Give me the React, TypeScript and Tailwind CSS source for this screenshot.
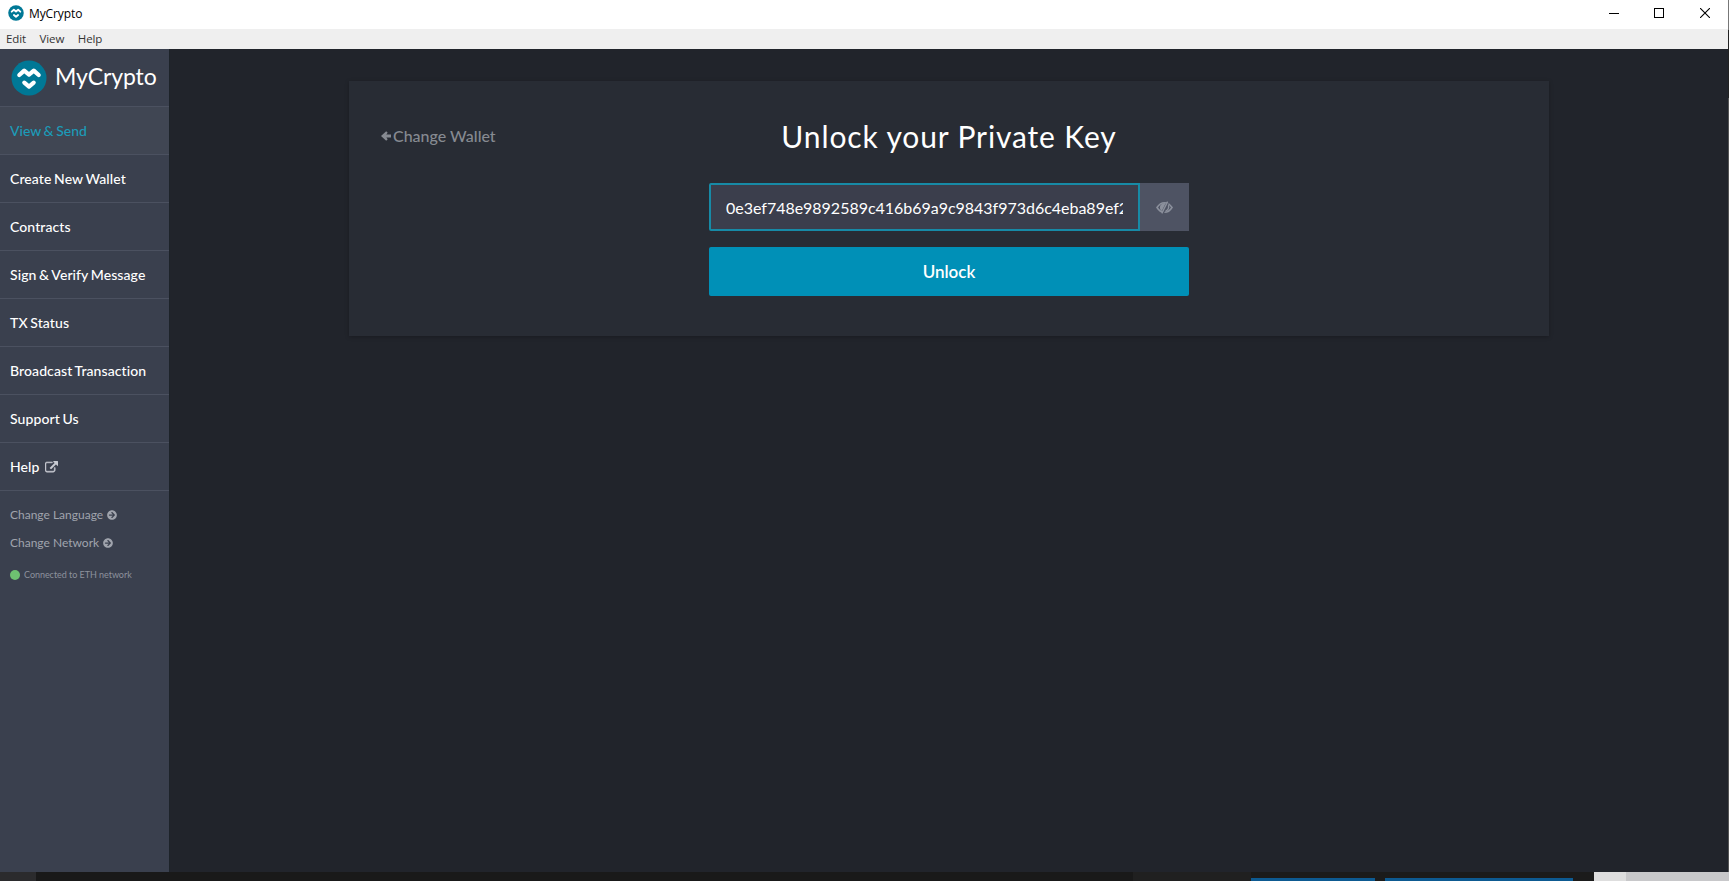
import React from "react";
import { FaArrowCircleRight } from "react-icons/fa";

const links = [
  "View & Send",
  "Create New Wallet",
  "Contracts",
  "Sign & Verify Message",
  "TX Status",
  "Broadcast Transaction",
  "Support Us",
  "Help",
];

function LogoMark({ className }: { className: string }) {
  return (
    <svg viewBox="0 0 36 36" className={className} fill="none">
      <circle cx="18" cy="18" r="17.5" fill="#007896" />
      <path
        d="M8.3 15 L13.2 10.6 L18 14.6 L22.8 10.6 L27.7 15"
        stroke="#fff"
        strokeWidth="4.2"
        strokeLinecap="round"
        strokeLinejoin="round"
      />
      <path
        d="M13.3 22.7 L18 26.6 L22.7 22.7"
        stroke="#fff"
        strokeWidth="4.2"
        strokeLinecap="round"
        strokeLinejoin="round"
      />
    </svg>
  );
}

function ExternalLinkIcon() {
  return (
    <svg viewBox="0 0 1792 1792" className="mt-px ml-[5px] size-[13px]" fill="#c9ccd3" stroke="#c9ccd3" strokeWidth="70">
      <path d="M1408 928v320q0 119-84.5 203.5T1120 1536H288q-119 0-203.5-84.5T0 1248V416q0-119 84.5-203.5T288 128h704q14 0 23 9t9 23v64q0 14-9 23t-23 9H288q-66 0-113 47t-47 113v832q0 66 47 113t113 47h832q66 0 113-47t47-113V928q0-14 9-23t23-9h64q14 0 23 9t9 23zm384-864v512q0 26-19 45t-45 19-45-19l-176-176-652 652q-10 10-23 10t-23-10L695 983q-10-10-10-23t10-23l652-652-176-176q-19-19-19-45t19-45 45-19h512q26 0 45 19t19 45z" />
    </svg>
  );
}

function HiddenEyeIcon() {
  return (
    <svg viewBox="0 0 17 13" className="-ml-px h-[13px] w-[17px]" fill="none" stroke="#8b909c">
      <path d="M1 6.5 C3.2 3 5.7 1.7 8.5 1.7 C11.3 1.7 13.8 3 16 6.5 C13.8 10 11.3 11.3 8.5 11.3 C5.7 11.3 3.2 10 1 6.5 Z" strokeWidth="1.6" />
      <path d="M9.6 2.2 A4.4 4.4 0 0 0 5.8 10 Z" fill="#8b909c" stroke="none" />
      <path d="M12.2 4.2 A4 4 0 0 1 9.4 10" strokeWidth="1.4" />
      <path d="M12.6 0.8 L7.2 12.4" stroke="#4e5363" strokeWidth="1.4" />
      <path d="M11.6 0.6 L5.8 12.4" strokeWidth="1.4" />
    </svg>
  );
}

function TitleBar() {
  return (
    <header className="flex h-[29px] shrink-0 items-center bg-white pl-2 text-black">
      <LogoMark className="-mt-[3px] size-4" />
      <span className="-mt-px ml-[5px] text-[12px] leading-4 tracking-[-0.1px]">MyCrypto</span>
      <div className="mr-[18px] -mt-[3px] ml-auto flex items-center gap-[36px]">
        <svg viewBox="0 0 10 10" className="-mr-px size-[10px]" stroke="#000" shapeRendering="crispEdges">
          <path d="M0 5.5H10" />
        </svg>
        <svg viewBox="0 0 10 10" className="size-[10px]" stroke="#000" fill="none" shapeRendering="crispEdges">
          <path d="M.5 .5H9.5V9.5H.5Z" />
        </svg>
        <svg viewBox="0 0 10 10" className="size-[10px]" stroke="#000">
          <path d="M0 0L10 10M10 0L0 10" strokeWidth="1.1" />
        </svg>
      </div>
    </header>
  );
}

function Sidebar() {
  return (
    <aside className="flex w-[169px] shrink-0 flex-col bg-[#3a404e]">
      <div className="flex h-[58px] shrink-0 items-center border-b border-[#4b5160] pl-[11px]">
        <LogoMark className="mt-px size-9" />
        <span className="-mt-[3px] ml-[8px] font-['Lato'] text-[23px] leading-7 tracking-[-0.1px] text-white">MyCrypto</span>
      </div>
      <nav className="font-['Lato'] text-[14px] font-medium tracking-[0.09px] text-white [font-variant-ligatures:none] [word-spacing:-1px]">
        {links.map((label, i) => (
          <a
            key={label}
            className={
              i === 0
                ? "flex h-12 items-center border-b border-[#4b5160] bg-[#404653] pl-[10px] tracking-normal text-[#1c9bb8]"
                : "flex h-12 items-center border-b border-[#4b5160] pl-[10px]"
            }
          >
            {label}
            {label === "Help" && <ExternalLinkIcon />}
          </a>
        ))}
      </nav>
      <div className="flex flex-col pt-[10px] pl-[10px] font-['Lato'] text-[12px] text-[#a0a4ad]">
        <a className="flex h-7 items-center gap-1">
          Change Language <FaArrowCircleRight className="size-[10px]" />
        </a>
        <a className="flex h-7 items-center gap-1">
          Change Network <FaArrowCircleRight className="size-[10px]" />
        </a>
        <div className="mt-[5px] flex h-[26px] items-center gap-1 text-[9px] tracking-[-0.04px] text-[#8d929d]">
          <span className="size-[10px] rounded-full bg-[#6ec071]" />
          Connected to ETH network
        </div>
      </div>
    </aside>
  );
}

function UnlockPanel() {
  return (
    <section className="relative mx-auto mt-8 flex h-[255px] w-[1200px] flex-col items-center bg-[#282c34] shadow-[0_1px_4px_rgba(0,0,0,0.25)]">
      <a className="absolute top-[43px] left-8 flex items-center gap-[2px] text-[16px] leading-6 font-medium text-[#868a91]">
        <svg viewBox="0 0 10 10" className="size-[10px]" fill="currentColor">
          <path d="M0 5 L5.2 .2 L6.7 1.7 L5.3 3.5 H10 V6.5 H5.3 L6.7 8.3 L5.2 9.8 Z" />
        </svg>
        Change Wallet
      </a>
      <h1 className="mt-[34px] text-[30px] leading-[42px] tracking-[0.87px] text-white">Unlock your Private Key</h1>
      <form className="mt-[26px] flex w-[480px] flex-col gap-4">
        <div className="flex h-12">
          <div className="flex w-[431px] items-center rounded-l-[2px] border-2 border-[#178aa6] bg-[#3b3e4c] px-[15px] pt-px text-[16px] text-white">
            <span className="overflow-hidden whitespace-nowrap tracking-[-0.02px]">0e3ef748e9892589c416b69a9c9843f973d6c4eba89ef2</span>
          </div>
          <div className="flex flex-1 items-center justify-center bg-[#4e5363]">
            <HiddenEyeIcon />
          </div>
        </div>
        <button type="button" className="h-[49px] rounded-[2px] bg-[#0090b7] text-[17px] font-semibold text-white">
          Unlock
        </button>
      </form>
    </section>
  );
}

export default function App() {
  return (
    <div className="flex h-[881px] w-[1729px] flex-col overflow-hidden bg-[#1b1b1b] font-['Open_Sans','Noto_Sans',sans-serif]">
      <div className="flex h-[872px] shrink-0">
        <div className="flex w-[1728px] flex-col">
          <TitleBar />
          <div className="flex h-5 shrink-0 items-center gap-[13.5px] bg-[#efefef] pl-[6px] text-[11.5px] leading-4 tracking-[-0.1px] text-[#333]">
            <span>Edit</span>
            <span>View</span>
            <span>Help</span>
          </div>
          <div className="flex flex-1 bg-[#21242b]">
            <Sidebar />
            <main className="flex-1 border-l border-[#1d2329] font-['Lato']">
              <UnlockPanel />
            </main>
          </div>
        </div>
        <div className="flex w-px flex-col">
          <div className="h-[30px] bg-[#777]" />
          <div className="h-[68px] bg-[#222]" />
          <div className="flex-1 bg-[#555]" />
        </div>
      </div>
      <footer className="flex h-[9px] items-end">
        <div className="h-full w-9 bg-[#2b2b2d]" />
        <div className="h-full w-[1097px] bg-[#191919]" />
        <div className="h-full w-[118px] bg-[#202020]" />
        <div className="h-[3px] w-[124px] bg-[#0d5a91]" />
        <div className="w-[10px]" />
        <div className="h-[3px] w-[188px] bg-[#0d5a91]" />
        <div className="h-full w-[21px] bg-[#1b1b1b]" />
        <div className="h-full w-8 bg-[#dedede]" />
        <div className="h-full flex-1 bg-[#c8c8ca]" />
      </footer>
    </div>
  );
}
